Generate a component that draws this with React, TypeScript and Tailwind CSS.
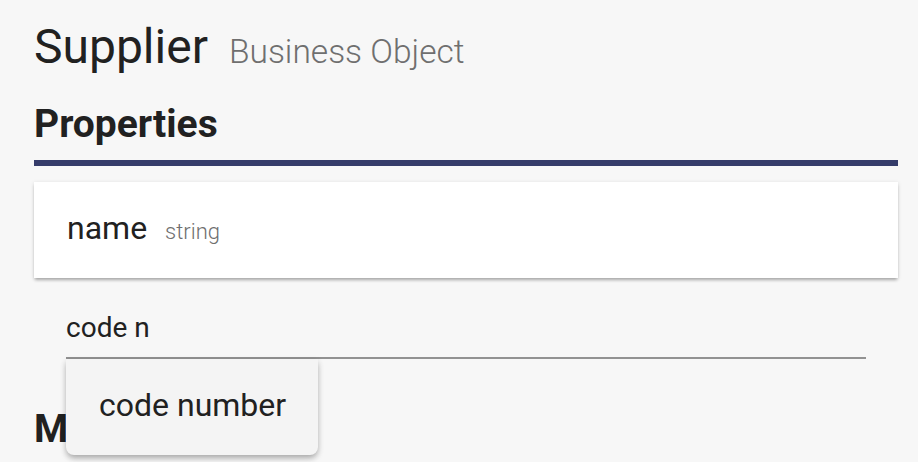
import React from 'react';

const App: React.FC = () => {
  return (
    <div className="min-h-[462px] bg-[#f7f7f7] font-['Roboto',sans-serif] text-[#212121] pl-[34px] pr-[20px] overflow-hidden">
      <div className="pt-[23px] flex items-baseline gap-[21px]">
        <h1 className="text-[48px] leading-[48px] font-normal">Supplier</h1>
        <span className="text-[33.5px] leading-[34px] font-light text-[#6f6f6f]">Business Object</span>
      </div>

      <h2 className="mt-[34px] text-[39px] leading-[39px] font-bold">Properties</h2>
      <div className="mt-[16px] h-[6px] bg-[#353c6a]" />

      <div className="mt-[16px] h-[96px] bg-white px-[33px] pt-[30px] shadow-[0_3px_3px_-1px_rgba(0,0,0,0.25),0_1px_4px_rgba(0,0,0,0.14)]">
        <div className="flex items-baseline gap-[18px]">
          <span className="text-[32px] leading-[32px]">name</span>
          <span className="text-[22px] leading-[22px] font-light text-[#6f6f6f]">string</span>
        </div>
      </div>

      <div className="ml-[32px] mr-[32px] mt-[36px] relative">
        <div className="pb-[15px] border-b-2 border-[#929292] text-[28px] leading-[28px]">code n</div>
        <div className="absolute left-0 top-full z-10 w-[252px] h-[96px] rounded-b-[8px] bg-[#f4f4f4] pl-[33px] pt-[31px] shadow-[0_4px_6px_-1px_rgba(0,0,0,0.25),0_2px_6px_rgba(0,0,0,0.12)]">
          <span className="text-[32px] leading-[30px] whitespace-nowrap">code number</span>
        </div>
      </div>

      <h2 className="mt-[51px] text-[39px] leading-[39px] font-bold">Methods</h2>
    </div>
  );
};

export default App;
